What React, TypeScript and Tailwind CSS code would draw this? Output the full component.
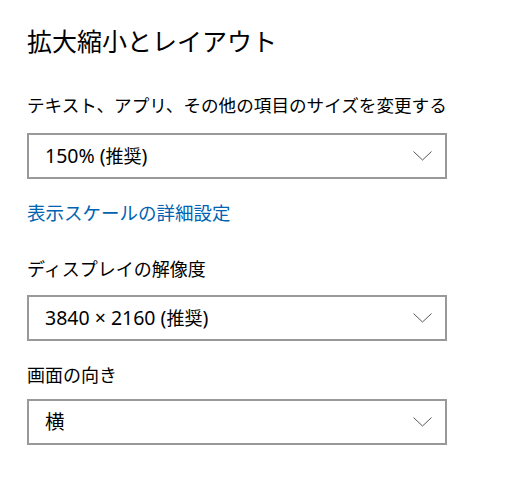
const font = { fontFamily: '"Noto Sans", "Noto Sans CJK JP", sans-serif' }

function Dropdown({ value, note }: { value: string; note?: string }) {
  return (
    <div className="flex h-[46px] w-[420px] items-center justify-between border-2 border-[#999999] bg-white pl-[16px] pr-[13px]">
      <span className="text-[19.5px] leading-[20px] text-black">
        {value}
        {note && (
          <>
            {' ('}
            <span className="text-[18px]">{note}</span>
            {')'}
          </>
        )}
      </span>
      <svg width="19" height="10" viewBox="0 0 19 10" fill="none">
        <path d="M0.5 0.5 L9.5 9 L18.5 0.5" stroke="#555" strokeWidth="1" />
      </svg>
    </div>
  )
}

export default function App() {
  return (
    <div className="min-h-[487px] w-[517px] bg-white pl-[27px] pt-[28px]" style={font}>
      <h1 className="text-[25px] font-normal leading-[26px] text-black">拡大縮小とレイアウト</h1>

      <p className="mt-[42px] text-[17.6px] leading-[18px] text-black">
        テキスト、アプリ、その他の項目のサイズを変更する
      </p>
      <div className="mt-[19px]">
        <Dropdown value="150%" note="推奨" />
      </div>

      <p className="mt-[25px] text-[18.5px] leading-[18px] text-[#0063b1]">表示スケールの詳細設定</p>

      <p className="mt-[38px] text-[18px] leading-[18px] text-black">ディスプレイの解像度</p>
      <div className="mt-[17px]">
        <Dropdown value="3840 × 2160" note="推奨" />
      </div>

      <p className="mt-[25px] text-[18px] leading-[18px] text-black">画面の向き</p>
      <div className="mt-[15px]">
        <Dropdown value="横" />
      </div>
    </div>
  )
}
